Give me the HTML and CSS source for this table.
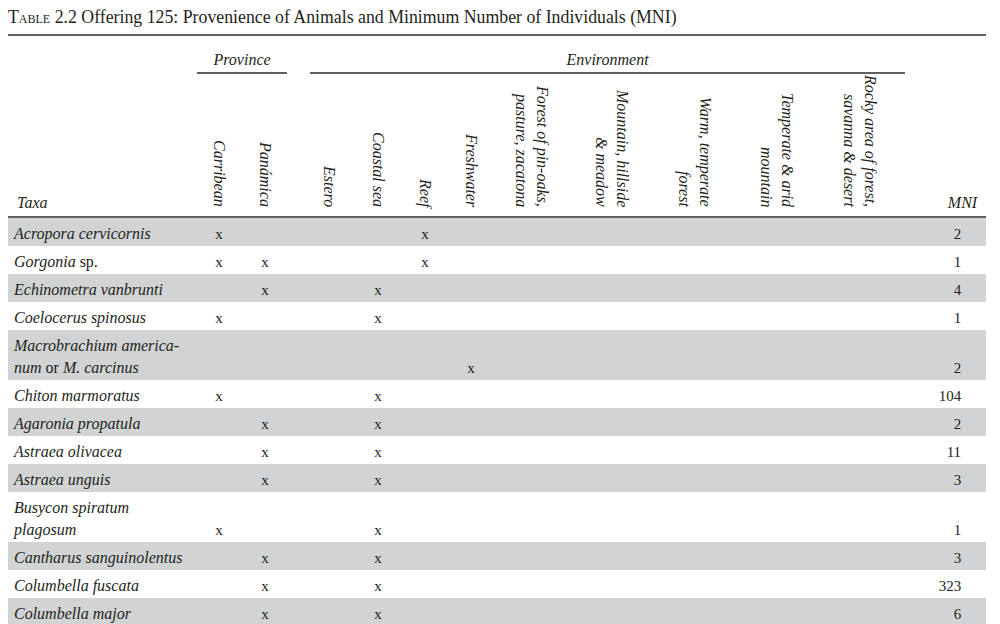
FILE: index.html
```html
<!DOCTYPE html>
<html lang="en">
<head>
<meta charset="utf-8">
<title>Table 2.2 Offering 125</title>
<link rel="stylesheet" href="styles.css">
</head>
<body>
<div class="page">
  <h1 class="title"><span class="sc">Table 2.2</span> Offering 125: Provenience of Animals and Minimum Number of Individuals (MNI)</h1>
  <table class="data">
    <colgroup>
      <col class="c-taxa">
      <col class="c-narrow">
      <col class="c-narrow">
      <col class="c-gap">
      <col class="c-estero">
      <col class="c-coastal">
      <col class="c-narrow">
      <col class="c-narrow">
      <col class="c-forest">
      <col class="c-wide">
      <col class="c-mid">
      <col class="c-mid">
      <col class="c-wide">
      <col class="c-wide">
    </colgroup>
    <thead>
      <tr class="groups">
        <th></th>
        <th colspan="2" class="grp"><div class="grp-label prov">Province</div></th>
        <th></th>
        <th colspan="9" class="grp"><div class="grp-label env">Environment</div></th>
        <th></th>
      </tr>
      <tr class="heads">
        <th class="h-taxa">Taxa</th>
        <th class="v"><span>Carribean</span></th>
        <th class="v"><span>Panámica</span></th>
        <th></th>
        <th class="v"><span>Estero</span></th>
        <th class="v"><span>Coastal sea</span></th>
        <th class="v"><span>Reef</span></th>
        <th class="v"><span>Freshwater</span></th>
        <th class="v"><span>Forest of pin-oaks,<br>pasture, zacatona</span></th>
        <th class="v"><span>Mountain, hillside<br>&amp; meadow</span></th>
        <th class="v"><span>Warm, temperate<br>forest</span></th>
        <th class="v"><span>Temperate &amp; arid<br>mountain</span></th>
        <th class="v"><span>Rocky area of forest,<br>savanna &amp; desert</span></th>
        <th class="h-mni">MNI</th>
      </tr>
    </thead>
    <tbody>
      <tr class="shade"><td class="taxon"><i>Acropora cervicornis</i></td><td>x</td><td></td><td></td><td></td><td></td><td>x</td><td></td><td></td><td></td><td></td><td></td><td></td><td class="mni">2</td></tr>
      <tr><td class="taxon"><i>Gorgonia</i> sp.</td><td>x</td><td>x</td><td></td><td></td><td></td><td>x</td><td></td><td></td><td></td><td></td><td></td><td></td><td class="mni">1</td></tr>
      <tr class="shade"><td class="taxon"><i>Echinometra vanbrunti</i></td><td></td><td>x</td><td></td><td></td><td>x</td><td></td><td></td><td></td><td></td><td></td><td></td><td></td><td class="mni">4</td></tr>
      <tr><td class="taxon"><i>Coelocerus spinosus</i></td><td>x</td><td></td><td></td><td></td><td>x</td><td></td><td></td><td></td><td></td><td></td><td></td><td></td><td class="mni">1</td></tr>
      <tr class="shade"><td class="taxon"><i>Macrobrachium america-<br>num</i> or <i>M. carcinus</i></td><td></td><td></td><td></td><td></td><td></td><td></td><td>x</td><td></td><td></td><td></td><td></td><td></td><td class="mni">2</td></tr>
      <tr><td class="taxon"><i>Chiton marmoratus</i></td><td>x</td><td></td><td></td><td></td><td>x</td><td></td><td></td><td></td><td></td><td></td><td></td><td></td><td class="mni">104</td></tr>
      <tr class="shade"><td class="taxon"><i>Agaronia propatula</i></td><td></td><td>x</td><td></td><td></td><td>x</td><td></td><td></td><td></td><td></td><td></td><td></td><td></td><td class="mni">2</td></tr>
      <tr><td class="taxon"><i>Astraea olivacea</i></td><td></td><td>x</td><td></td><td></td><td>x</td><td></td><td></td><td></td><td></td><td></td><td></td><td></td><td class="mni">11</td></tr>
      <tr class="shade"><td class="taxon"><i>Astraea unguis</i></td><td></td><td>x</td><td></td><td></td><td>x</td><td></td><td></td><td></td><td></td><td></td><td></td><td></td><td class="mni">3</td></tr>
      <tr><td class="taxon"><i>Busycon spiratum<br>plagosum</i></td><td>x</td><td></td><td></td><td></td><td>x</td><td></td><td></td><td></td><td></td><td></td><td></td><td></td><td class="mni">1</td></tr>
      <tr class="shade"><td class="taxon"><i>Cantharus sanguinolentus</i></td><td></td><td>x</td><td></td><td></td><td>x</td><td></td><td></td><td></td><td></td><td></td><td></td><td></td><td class="mni">3</td></tr>
      <tr><td class="taxon"><i>Columbella fuscata</i></td><td></td><td>x</td><td></td><td></td><td>x</td><td></td><td></td><td></td><td></td><td></td><td></td><td></td><td class="mni">323</td></tr>
      <tr class="shade"><td class="taxon"><i>Columbella major</i></td><td></td><td>x</td><td></td><td></td><td>x</td><td></td><td></td><td></td><td></td><td></td><td></td><td></td><td class="mni">6</td></tr>
    </tbody>
  </table>
</div>
</body>
</html>
```
FILE: styles.css
```css
html, body {
  margin: 0;
  padding: 0;
  background: #ffffff;
}

body {
  color: #231f20;
  font-family: "Liberation Serif", "Times New Roman", serif;
  font-size: 16px;
}

.page {
  width: 978px;
  padding: 0 0 0 8px;
}

.title {
  margin: 0;
  padding: 7px 0 7px 0;
  font-size: 17.8px;
  line-height: 20px;
  font-weight: normal;
  border-bottom: 2px solid #5f5f5f;
  white-space: nowrap;
}

.sc {
  font-variant: small-caps;
}

.data {
  width: 978px;
  table-layout: fixed;
  border-collapse: collapse;
  border-spacing: 0;
}

.c-taxa { width: 188px; }
.c-narrow { width: 46px; }
.c-gap { width: 16px; }
.c-estero { width: 50px; }
.c-coastal { width: 48px; }
.c-forest { width: 76px; }
.c-mid { width: 82px; }
.c-wide { width: 84px; }

th {
  font-weight: normal;
  font-style: italic;
  padding: 0;
}

.groups th {
  padding-top: 14px;
  vertical-align: bottom;
}

.grp-label {
  line-height: 20px;
  padding-bottom: 2px;
  border-bottom: 2px solid #5f5f5f;
  text-align: center;
}

.prov {
  margin: 0 1px;
}

.env {
  margin: 0 -3px 0 6px;
}

.heads th {
  height: 137px;
  vertical-align: bottom;
  padding-bottom: 5px;
  border-bottom: 2px solid #5f5f5f;
}

.heads .h-taxa {
  text-align: left;
  padding-left: 9px;
  padding-bottom: 3px;
  line-height: 20px;
}

.heads .h-mni {
  text-align: right;
  padding-right: 9px;
  padding-bottom: 3px;
  line-height: 20px;
}

.v {
  text-align: center;
}

.v span {
  display: inline-block;
  writing-mode: vertical-rl;
  text-align: end;
  line-height: 21px;
  white-space: nowrap;
}

td {
  padding: 5px 0 1px 0;
  line-height: 22px;
  text-align: center;
  vertical-align: bottom;
  font-size: 15px;
}

td.taxon {
  text-align: left;
  padding-left: 6px;
  font-size: 16px;
}

td.mni {
  text-align: right;
  padding-right: 25px;
}

tr.shade td {
  background: #d1d3d4;
}
```
